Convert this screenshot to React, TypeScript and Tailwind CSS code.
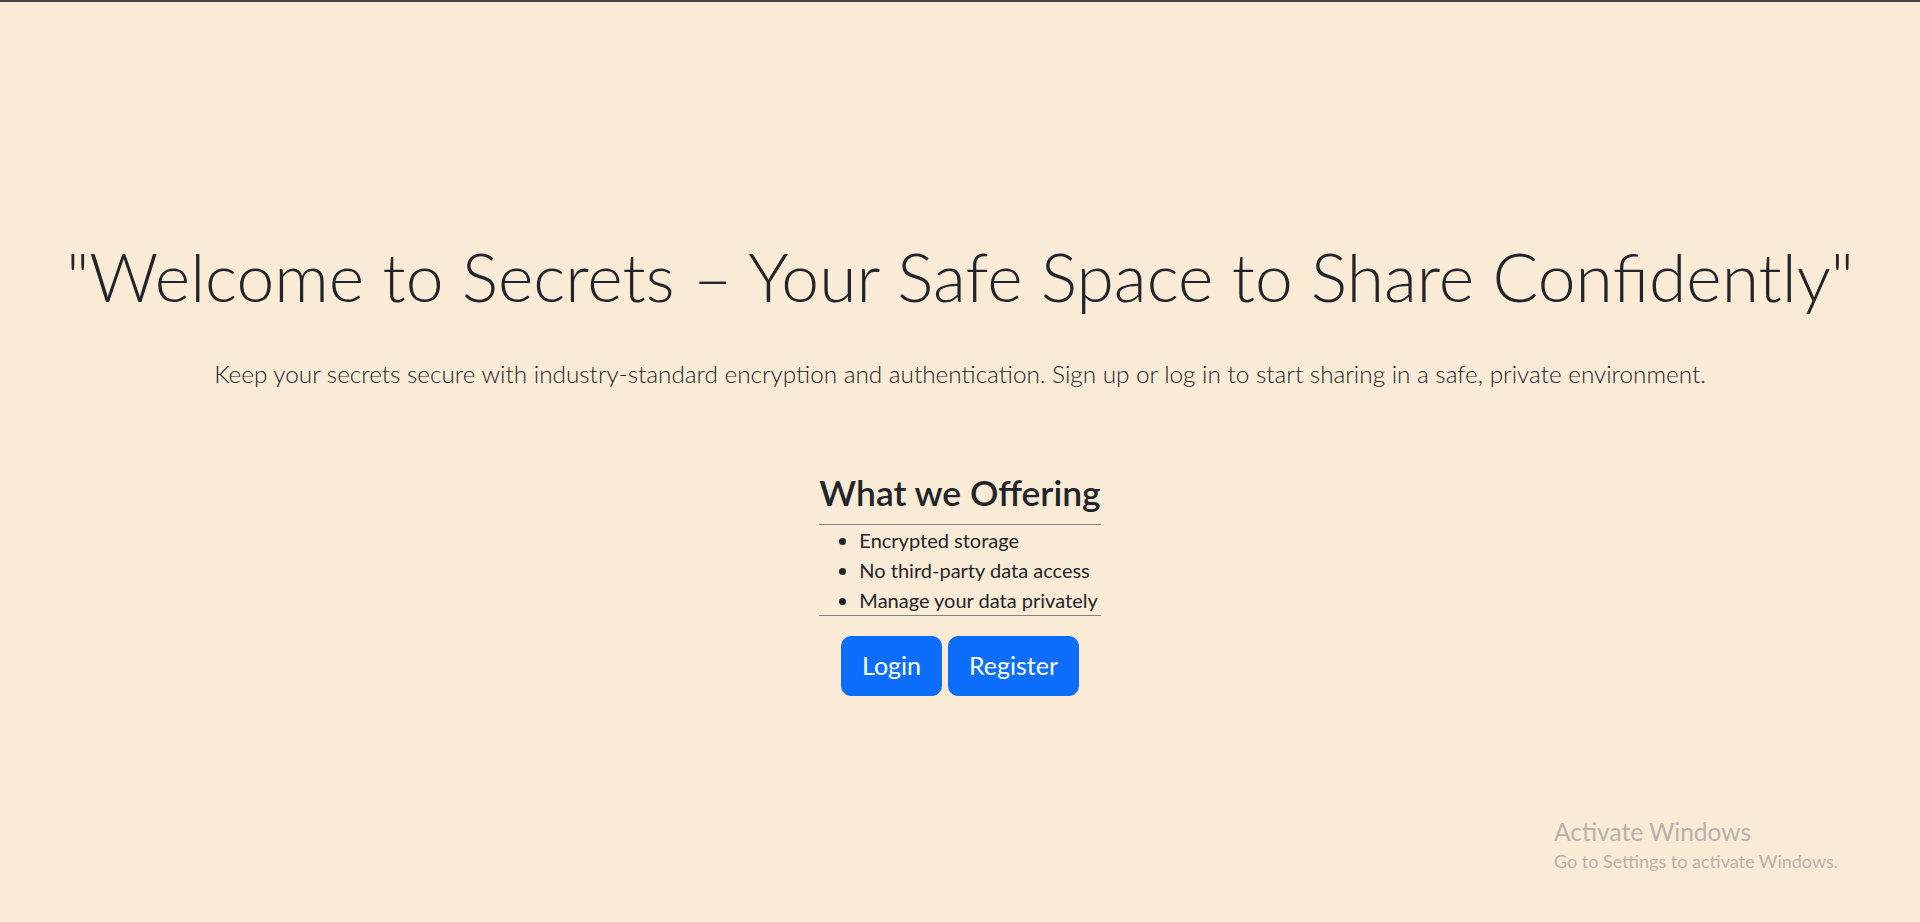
import React from "react";

export default function App() {
  return (
    <div className="relative min-h-screen overflow-hidden bg-[#faebd7] text-[#212529] font-['Lato',_'Open_Sans',_sans-serif]">
      <div className="h-[2px] bg-[#3d4347]" />
      <main className="flex flex-col items-center pt-[234px] text-center">
        <h1 className="text-[67.8px] leading-[80px] font-light whitespace-nowrap">
          "Welcome to Secrets – Your Safe Space to Share Confidently"
        </h1>
        <p className="mt-[40px] text-[24.3px] leading-[36px] font-light whitespace-nowrap">
          Keep your secrets secure with industry-standard encryption and authentication. Sign up or log in to start sharing in a safe, private environment.
        </p>
        <div className="mt-[80px] flex flex-col text-left">
          <h3 className="border-b border-[#7f8185] pb-[10px] text-[35.4px] font-semibold leading-[42px] whitespace-nowrap">
            What we Offering
          </h3>
          <ul className="list-disc border-b border-[#7f8185] pl-[40px] text-[20px] leading-[30px]">
            <li>Encrypted storage</li>
            <li>No third-party data access</li>
            <li>Manage your data privately</li>
          </ul>
        </div>
        <div className="mt-[20px] flex gap-[6px]">
          <button className="flex h-[60px] items-center rounded-[10px] border border-[#0d6efd] bg-[#0d6efd] px-[20px] text-[25px] text-white">
            Login
          </button>
          <button className="flex h-[60px] items-center rounded-[10px] border border-[#0d6efd] bg-[#0d6efd] px-[20px] text-[25px] text-white">
            Register
          </button>
        </div>
      </main>
      <div className="pointer-events-none absolute left-[1554px] top-[817px] text-[#b7b2ab]">
        <div className="text-[24.5px] leading-[30px]">Activate Windows</div>
        <div className="mt-[2px] text-[18px] leading-[24px]">Go to Settings to activate Windows.</div>
      </div>
    </div>
  );
}
